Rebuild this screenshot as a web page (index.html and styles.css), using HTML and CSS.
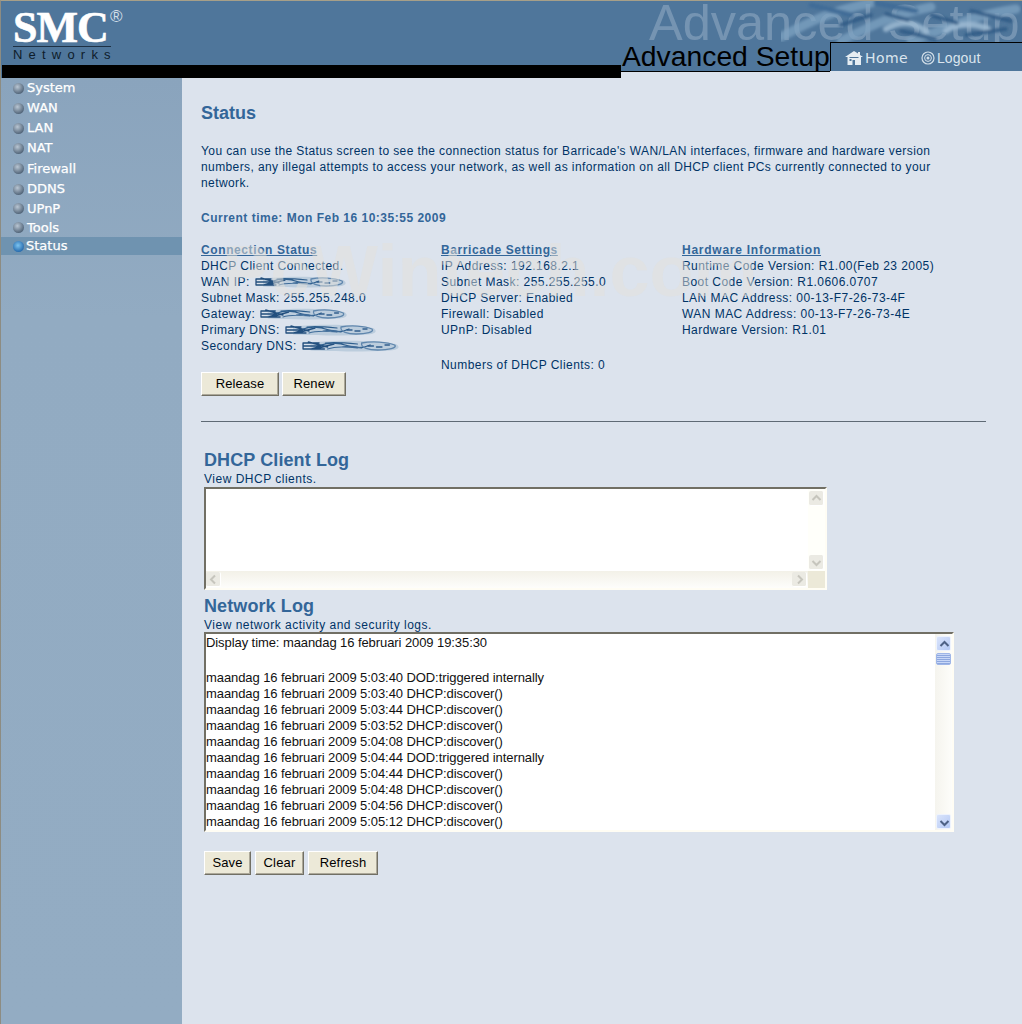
FILE: index.html
```html
<!DOCTYPE html>
<html lang="en">
<head>
<meta charset="utf-8">
<title>SMC Networks - Status</title>
<link rel="stylesheet" href="styles.css">
</head>
<body>
<div class="frame">
  <header class="header">
    <div class="brand">
      <div class="logo">
        <div class="logo-mark">SMC<span class="logo-reg">®</span></div>
        <div class="logo-sub">Networks</div>
      </div>
      <div class="black-bar"></div>
    </div>
    <div class="head-right">
      <div class="ghost">
        <span class="ghost-text">Advanced Setup</span>
        <svg class="ghost-art" viewBox="0 0 240 41" width="240" height="41" aria-hidden="true">
          <defs><filter id="soft"><feGaussianBlur stdDeviation="1.600"/></filter></defs>
          <g filter="url(#soft)" fill="none" stroke-linecap="round">
            <path d="M0 36C30 20 50 10 90 2M60 40C90 25 110 14 150 6M130 40C160 30 190 14 235 8" stroke="#7ea3c2" stroke-width="9" opacity=".75"/>
            <path d="M105 28c14-8 26-8 40 2M165 30c10-8 30-8 42-2" stroke="#9dbbd3" stroke-width="6" opacity=".85"/>
            <path d="M30 4l40 10M95 2l40 8" stroke="#3f6c97" stroke-width="5"/>
            <path d="M60 24l30-10M105 13l22 6M120 30l34 8M150 14l26 8M185 34l40-6M190 10l40 10" stroke="#2f5a85" stroke-width="3.500"/>
          </g>
        </svg>
      </div>
      <div class="head-row">
        <div class="page-title">Advanced Setup</div>
        <nav class="top-nav">
          <a class="top-link home">
            <svg width="18" height="16" viewBox="0 0 18 16"><path d="M9 1L0 7h2.500v8h5v-5h2.500v5H16V7h2L15 5V2h-2v1.500z" fill="#e6edf3"/><path d="M4.500 9h2v2h-2z" fill="#4f769b"/><path d="M4.500 7.500h9" stroke="#4f769b"/></svg>
            <span>Home</span>
          </a>
          <a class="top-link logout">
            <svg width="14" height="14" viewBox="0 0 14 14"><circle cx="7" cy="7" r="6" fill="none" stroke="#d3dfe9" stroke-width="1.200"/><circle cx="7" cy="7" r="3.400" fill="none" stroke="#d3dfe9"/><circle cx="7" cy="7" r="1.500" fill="#d3dfe9"/></svg>
            <span>Logout</span>
          </a>
        </nav>
      </div>
    </div>
  </header>
  <div class="body-row">
    <aside class="sidebar">
      <a class="side-item"><i class="dot"></i>System</a>
      <a class="side-item"><i class="dot"></i>WAN</a>
      <a class="side-item"><i class="dot"></i>LAN</a>
      <a class="side-item"><i class="dot"></i>NAT</a>
      <a class="side-item h21"><i class="dot"></i>Firewall</a>
      <a class="side-item"><i class="dot"></i>DDNS</a>
      <a class="side-item h19"><i class="dot"></i>UPnP</a>
      <a class="side-item h19"><i class="dot"></i>Tools</a>
      <a class="side-item active"><i class="dot on"></i>Status</a>
    </aside>
    <main class="main">
      <div class="watermark">PcWintech.com</div>
      <h1 class="title">Status</h1>
      <p class="intro">You can use the Status screen to see the connection status for Barricade's WAN/LAN interfaces, firmware and hardware version numbers, any illegal attempts to access your network, as well as information on all DHCP client PCs currently connected to your network.</p>
      <p class="time">Current time: Mon Feb 16 10:35:55 2009</p>
      <section class="info">
        <div class="col">
          <h2 class="col-head">Connection Status</h2>
          <div class="line">DHCP Client Connected.</div>
          <div class="line">WAN IP: <svg class="smear w92" viewBox="0 0 92 12" preserveAspectRatio="none"><use href="#smear"/></svg></div>
          <div class="line">Subnet Mask: 255.255.248.0</div>
          <div class="line">Gateway: <svg class="smear w88" viewBox="0 0 92 12" preserveAspectRatio="none"><use href="#smear"/></svg></div>
          <div class="line">Primary DNS: <svg class="smear w92" viewBox="0 0 92 12" preserveAspectRatio="none"><use href="#smear"/></svg></div>
          <div class="line">Secondary DNS: <svg class="smear w98" viewBox="0 0 92 12" preserveAspectRatio="none"><use href="#smear"/></svg></div>
          <div class="btn-row conn-btns">
            <button class="btn b-release">Release</button>
            <button class="btn b-renew">Renew</button>
          </div>
        </div>
        <div class="col">
          <h2 class="col-head">Barricade Settings</h2>
          <div class="line">IP Address: 192.168.2.1</div>
          <div class="line">Subnet Mask: 255.255.255.0</div>
          <div class="line">DHCP Server: Enabled</div>
          <div class="line">Firewall: Disabled</div>
          <div class="line">UPnP: Disabled</div>
          <div class="line clients">Numbers of DHCP Clients: 0</div>
        </div>
        <div class="col">
          <h2 class="col-head wide-head">Hardware Information</h2>
          <div class="line">Runtime Code Version: R1.00(Feb 23 2005)</div>
          <div class="line">Boot Code Version: R1.0606.0707</div>
          <div class="line">LAN MAC Address: 00-13-F7-26-73-4F</div>
          <div class="line">WAN MAC Address: 00-13-F7-26-73-4E</div>
          <div class="line">Hardware Version: R1.01</div>
        </div>
      </section>
      <hr class="rule">
      <section class="log-section">
        <h2 class="log-head first">DHCP Client Log</h2>
        <div class="log-sub">View DHCP clients.</div>
        <div class="box box-dhcp">
          <div class="box-view"></div>
          <div class="vbar pale">
            <span class="sb-btn pale-btn"><svg viewBox="0 0 15 15"><path d="M3.500 9L7.500 5l4 4" class="chev"/></svg></span>
            <span class="sb-btn pale-btn"><svg viewBox="0 0 15 15"><path d="M3.500 6L7.500 10l4-4" class="chev"/></svg></span>
          </div>
          <div class="hbar">
            <span class="sb-btn pale-btn"><svg viewBox="0 0 15 15"><path d="M9 3.500L5 7.500l4 4" class="chev"/></svg></span>
            <span class="sb-btn pale-btn"><svg viewBox="0 0 15 15"><path d="M6 3.500L10 7.500l-4 4" class="chev"/></svg></span>
          </div>
          <div class="corner"></div>
        </div>
        <h2 class="log-head second">Network Log</h2>
        <div class="log-sub">View network activity and security logs.</div>
        <div class="box box-net">
          <div class="log-text">
            <div class="log-line log-first">Display time: maandag 16 februari 2009 19:35:30</div>
            <div class="log-line">maandag 16 februari 2009 5:03:40 DOD:triggered internally</div>
            <div class="log-line">maandag 16 februari 2009 5:03:40 DHCP:discover()</div>
            <div class="log-line">maandag 16 februari 2009 5:03:44 DHCP:discover()</div>
            <div class="log-line">maandag 16 februari 2009 5:03:52 DHCP:discover()</div>
            <div class="log-line">maandag 16 februari 2009 5:04:08 DHCP:discover()</div>
            <div class="log-line">maandag 16 februari 2009 5:04:44 DOD:triggered internally</div>
            <div class="log-line">maandag 16 februari 2009 5:04:44 DHCP:discover()</div>
            <div class="log-line">maandag 16 februari 2009 5:04:48 DHCP:discover()</div>
            <div class="log-line">maandag 16 februari 2009 5:04:56 DHCP:discover()</div>
            <div class="log-line">maandag 16 februari 2009 5:05:12 DHCP:discover()</div>
          </div>
          <div class="vbar">
            <span class="sb-btn blue-btn"><svg viewBox="0 0 15 15"><path d="M3.500 9L7.500 5l4 4" class="chev dark"/></svg></span>
            <span class="thumb"></span>
            <span class="sb-btn blue-btn end"><svg viewBox="0 0 15 15"><path d="M3.500 6L7.500 10l4-4" class="chev dark"/></svg></span>
          </div>
        </div>
        <div class="btn-row log-btns">
          <button class="btn b-save">Save</button>
          <button class="btn b-clear">Clear</button>
          <button class="btn b-refresh">Refresh</button>
        </div>
      </section>
    </main>
  </div>
</div>
<svg class="defs" width="0" height="0" aria-hidden="true">
  <defs>
    <filter id="smudge" x="-5%" y="-20%" width="110%" height="140%"><feGaussianBlur stdDeviation=".4"/></filter>
    <g id="smear" fill="none" stroke-linecap="round" filter="url(#smudge)">
      <path d="M8 2.500c30-3 62-2 80 1.500 5 3 3 6-6 6.500-24 1.500-54 1-74 0z" fill="#bccddd" stroke="none"/>
      <path d="M1 3h15M1 3v6M1 6h17l-10 3M1 9h20M6 2l18 5M12 9l18-5" stroke="#234f7e" stroke-width="1.300"/>
      <path d="M18 5c8-3 18-2 26 1s14 2 20-1M22 3c10-1 20 0 30 1" stroke="#2f5e8d" stroke-width="1.200"/>
      <path d="M24 9c8-3 18-2 28-1M38 7c6-1 12-1 18 1" stroke="#3f6c99" stroke-width="1.100"/>
      <path d="M56 3c10-2 24-1 31 2 3 3-6 5-16 5-8 0-16-2-15-7z" stroke="#5f86ad" stroke-width="1.300"/>
      <path d="M62 6h5M70 7h5M78 5h4" stroke="#2f5e8d" stroke-width="1.400"/>
    </g>
  </defs>
</svg>
</body>
</html>
```
FILE: styles.css
```css
* { box-sizing: border-box; }
html, body { margin: 0; padding: 0; }
body { background: #dce3ed; font-family: "Liberation Sans", Arial, sans-serif; }
.frame { width: 1022px; height: 1024px; border-top: 1px solid #a79f88; border-left: 1px solid #8d8c82; display: flex; flex-direction: column; overflow: hidden; }
.defs { position: absolute; }

.header { display: flex; height: 77px; flex: none; }
.brand { width: 620px; flex: none; display: flex; flex-direction: column; background: #4f769b; }
.logo { height: 64px; padding: 8px 0 0 12px; }
.logo-mark { font-family: "Liberation Serif", serif; font-weight: 700; font-size: 44px; line-height: 37px; letter-spacing: -1px; color: #fff; -webkit-text-stroke: .6px #fff; position: relative; width: 98px; height: 37px; }
.logo-reg { position: absolute; left: 97px; top: -1px; font-family: "Liberation Sans", sans-serif; font-weight: 400; font-size: 17px; line-height: 17px; letter-spacing: 0; color: #d3dfe9; -webkit-text-stroke: 0; }
.logo-sub { width: 98px; border-top: 1px solid #1e3145; font-size: 13px; line-height: 15px; letter-spacing: 6.200px; color: #0e1c2a; white-space: nowrap; }
.black-bar { height: 13px; background: #000; margin-left: 1px; }

.head-right { flex: 1; display: flex; flex-direction: column; min-width: 0; }
.ghost { height: 41px; background: #4f769b; position: relative; overflow: hidden; }
.ghost-art { position: absolute; left: 160px; top: 0; }
.ghost-text { position: absolute; left: 28px; top: -8px; font-size: 50.500px; line-height: 60px; color: #7f9cb8; white-space: nowrap; opacity: .8; }
.head-row { display: flex; height: 30px; }
.page-title { width: 209px; flex: none; font-size: 28.300px; line-height: 28px; height: 30px; color: #000; background: #4f769b; border-bottom: 1px solid #000; white-space: nowrap; padding-left: 1px; }
.top-nav { flex: 1; background: #4f769b; border-left: 1px solid #000; border-top: 1px solid #000; height: 29px; display: flex; align-items: center; padding: 2px 0 0 14px; }
.top-link { display: flex; align-items: center; color: #dbe5ee; }
.home { font-family: "DejaVu Sans", sans-serif; font-size: 14px; letter-spacing: .4px; gap: 2px; margin-right: 13px; }
.logout { font-size: 14px; letter-spacing: .1px; gap: 2px; }

.body-row { flex: 1; display: flex; min-height: 0; }
.sidebar { width: 181px; flex: none; background: linear-gradient(#8aa4bd, #92abc2 240px, #93acc3); display: flex; flex-direction: column; }
.side-item { display: flex; align-items: center; height: 20px; padding-left: 12px; color: #fff; -webkit-text-stroke: .25px #fff; font-family: "DejaVu Sans", sans-serif; font-size: 13px; line-height: 20px; }
.side-item.h19 { height: 19px; }
.side-item.h21 { height: 21px; }
.side-item.active { height: 18px; background: #6f93b0; }
.dot { width: 11px; height: 11px; border-radius: 50%; margin-right: 3px; background: radial-gradient(circle at 40% 35%, #b9c6d3, #56697d 70%); flex: none; }
.dot.on { background: radial-gradient(circle at 45% 40%, #7cc4f0, #2468ab 75%); margin-right: 2px; }

.main { flex: 1; position: relative; padding: 25px 0 0 19px; color: #003366; font-size: 12px; letter-spacing: .45px; overflow: hidden; min-width: 0; }
.watermark { position: absolute; z-index: 1; left: 40px; top: 158px; font-size: 72px; line-height: 70px; font-weight: 700; color: rgba(228, 225, 220, .5); letter-spacing: 0; white-space: nowrap; pointer-events: none; }
.title { margin: 0; font-size: 18px; line-height: 20px; font-weight: 700; color: #336699; letter-spacing: 0; }
.intro { margin: 20px 0 0; width: 770px; line-height: 16px; letter-spacing: .4px; }
.time { margin: 19px 0 0; font-weight: 700; color: #336699; line-height: 16px; letter-spacing: .5px; }
.info { display: grid; grid-template-columns: 240px 241px 1fr; margin-top: 16px; }
.col-head { margin: 0; font-size: 12px; line-height: 16px; font-weight: 700; color: #336699; text-decoration: underline; letter-spacing: .6px; }
.wide-head { letter-spacing: .75px; }
.line { line-height: 16px; height: 16px; white-space: nowrap; display: flex; align-items: center; gap: 5px; }
.clients { margin-top: 19px; }
.smear { height: 12px; flex: none; }
.w92 { width: 92px; }
.w88 { width: 88px; }
.w98 { width: 98px; }
.btn-row { display: flex; }
.conn-btns { gap: 3px; margin-top: 18px; }
.log-btns { gap: 4px; margin-top: 19px; margin-left: 3px; }
.btn { height: 24px; padding: 0 0 1px; background: #ece9d8; border: 1px solid; border-color: #fff #716f64 #716f64 #fff; box-shadow: inset -1px -1px 0 #aca899; font-family: "Liberation Sans", Arial, sans-serif; font-size: 13px; letter-spacing: .15px; color: #000; }
.b-release { width: 78px; }
.b-renew { width: 64px; }
.b-save { width: 47px; }
.b-clear { width: 49px; }
.b-refresh { width: 70px; }

.rule { margin: 25px 0 0; width: 785px; height: 1px; border: 0; background: #5f6a75; }
.log-head { margin: 0 0 1px 3px; font-size: 18px; line-height: 22px; font-weight: 700; color: #336699; letter-spacing: .1px; }
.log-head.first { margin-top: 27px; }
.log-head.second { margin-top: 5px; }
.log-sub { margin-left: 3px; line-height: 14px; letter-spacing: .5px; }
.box { margin-left: 3px; background: #fff; border: 2px solid; border-color: #716f64 #fffdf4 #fffdf4 #716f64; }
.box-dhcp { width: 623px; height: 103px; margin-top: 1px; display: grid; grid-template-columns: 1fr 17px; grid-template-rows: 1fr 17px; }
.box-net { width: 750px; height: 200px; display: flex; }
.box-view { background: #fff; }
.log-text { flex: 1; overflow: hidden; padding-top: 1px; color: #111; font-size: 13px; line-height: 16px; letter-spacing: -.08px; white-space: nowrap; min-width: 0; }
.log-first { margin-bottom: 19px; }
.vbar { width: 17px; flex: none; background: linear-gradient(90deg, #f5f4ee, #fdfdfa); display: flex; flex-direction: column; padding: 2px 0 1px 1px; }
.vbar.pale { background: #fffffa; justify-content: space-between; }
.hbar { background: linear-gradient(#f3f1e8, #fdfdfb); display: flex; justify-content: space-between; padding: 1px 1px 0 0; }
.corner { background: #ece9d8; }
.sb-btn { width: 15px; height: 15px; display: block; flex: none; border-radius: 2px; }
.sb-btn svg { display: block; width: 15px; height: 15px; }
.pale-btn { background: #ebeae3; border-right: 1px solid #fff; border-bottom: 1px solid #fff; }
.blue-btn { background: linear-gradient(135deg, #dae4fb, #b4c9f5); border: 1px solid #eef3fd; }
.blue-btn.end { margin-top: auto; }
.thumb { width: 15px; height: 12px; margin-top: 2px; border: 1px solid #9fb6e8; border-radius: 2px; background: repeating-linear-gradient(#c8d7f7 0 1px, #8ea8df 1px 2px); }
.chev { fill: none; stroke: #c6c5bd; stroke-width: 2; }
.chev.dark { stroke: #4d6185; }
```
